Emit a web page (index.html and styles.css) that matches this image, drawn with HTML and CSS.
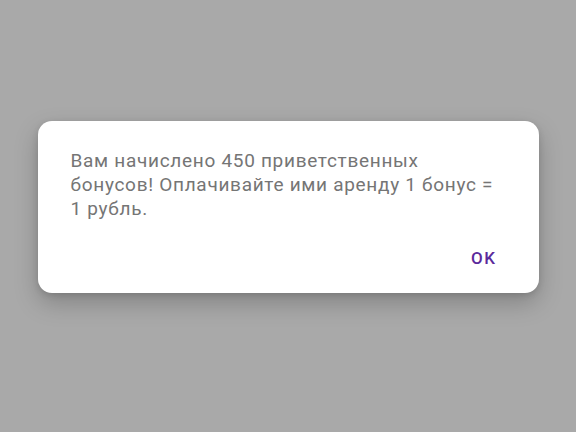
FILE: index.html
```html
<!DOCTYPE html>
<html lang="ru">
<head>
<meta charset="utf-8">
<link rel="stylesheet" href="styles.css">
</head>
<body>
<div class="screen">
  <div class="dialog">
    <p class="message">Вам начислено 450 приветственных бонусов! Оплачивайте ими аренду 1 бонус = 1 рубль.</p>
    <div class="actions">
      <button class="btn">OK</button>
    </div>
  </div>
</div>
</body>
</html>
```
FILE: styles.css
```css
html, body {
  margin: 0;
  padding: 0;
  height: 100%;
}
body {
  background: #a9a9a9;
  font-family: Roboto, "Noto Sans", sans-serif;
}
.screen {
  display: flex;
  justify-content: center;
  padding-top: 121px;
}
.dialog {
  width: 501px;
  height: 172px;
  box-sizing: border-box;
  background: #fff;
  border-radius: 14px;
  box-shadow: 0 10px 24px rgba(0,0,0,0.22), 0 2px 6px rgba(0,0,0,0.12);
  padding: 28px 33px 0 33px;
  display: flex;
  flex-direction: column;
}
.message {
  margin: 0;
  font-size: 19px;
  line-height: 24px;
  letter-spacing: 0.7px;
  color: #757575;
  width: 430px;
}
.actions {
  display: flex;
  justify-content: flex-end;
  margin-top: 27px;
  padding-right: 9px;
}
.btn {
  border: none;
  background: none;
  font-family: Roboto, sans-serif;
  font-size: 17px;
  font-weight: 500;
  letter-spacing: 1.5px;
  color: #5b2a9c;
  padding: 0;
  line-height: 20px;
}
```
